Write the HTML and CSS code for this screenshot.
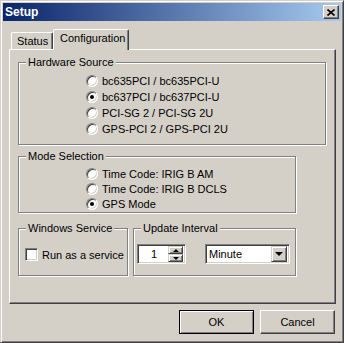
FILE: index.html
```html
<!DOCTYPE html>
<html lang="en">
<head>
<meta charset="UTF-8">
<title>Setup</title>
<link rel="stylesheet" href="styles.css">
</head>
<body>
<div class="window">
  <div class="titlebar">
    <span class="title">Setup</span>
    <span class="close">
      <svg width="8" height="7" viewBox="0 0 8 7"><path d="M0.5 0.5 L7.5 6.5 M7.5 0.5 L0.5 6.5" stroke="#000" stroke-width="1.6" fill="none"/></svg>
    </span>
  </div>

  <div class="tabs">
    <div class="tab">Status</div>
    <div class="tab active">Configuration</div>
  </div>

  <div class="panel">
    <div class="group hw">
      <span class="legend">Hardware Source</span>
      <div class="options">
        <div class="radio"><span class="circle"></span>bc635PCI / bc635PCI-U</div>
        <div class="radio"><span class="circle checked"></span>bc637PCI / bc637PCI-U</div>
        <div class="radio"><span class="circle"></span>PCI-SG 2 / PCI-SG 2U</div>
        <div class="radio"><span class="circle"></span>GPS-PCI 2 / GPS-PCI 2U</div>
      </div>
    </div>

    <div class="group mode">
      <span class="legend">Mode Selection</span>
      <div class="options">
        <div class="radio"><span class="circle"></span>Time Code: IRIG B AM</div>
        <div class="radio"><span class="circle"></span>Time Code: IRIG B DCLS</div>
        <div class="radio"><span class="circle checked"></span>GPS Mode</div>
      </div>
    </div>

    <div class="row">
      <div class="group service">
        <span class="legend">Windows Service</span>
        <div class="check"><span class="box"></span>Run as a service</div>
      </div>
      <div class="group interval">
        <span class="legend">Update Interval</span>
        <div class="controls">
          <div class="spin">
            <span class="value">1</span>
            <span class="arrows">
              <span class="arrow up"></span>
              <span class="arrow down"></span>
            </span>
          </div>
          <div class="combo">
            <span class="value">Minute</span>
            <span class="drop"></span>
          </div>
        </div>
      </div>
    </div>
  </div>

  <div class="buttons">
    <button class="btn default">OK</button>
    <button class="btn">Cancel</button>
  </div>
</div>
</body>
</html>
```

FILE: styles.css
```css
* { box-sizing: border-box; }
body { margin: 0; background: #d4d0c8; font-family: "Liberation Sans", Arial, sans-serif; font-size: 11px; color: #000; }

.window { width: 344px; height: 343px; padding: 2px; background: #d4d0c8; border: 1px solid; border-color: #d4d0c8 #404040 #404040 #d4d0c8; box-shadow: inset 1px 1px 0 #fff, inset -1px -1px 0 #808080; }

.titlebar { height: 18px; display: flex; align-items: center; justify-content: space-between; padding: 0 2px; background: linear-gradient(to right, #0a246a, #a6caf0); }
.title { color: #fff; font-weight: bold; font-size: 12px; }
.close { width: 16px; height: 14px; display: flex; align-items: center; justify-content: center; background: #d4d0c8; border: 1px solid; border-color: #fff #404040 #404040 #fff; box-shadow: inset -1px -1px 0 #808080; }

.tabs { display: flex; align-items: flex-end; height: 20px; margin: 8px 0 0 8px; position: relative; z-index: 1; }
.tab { height: 17px; padding: 2px 0 0 5px; width: 42px; background: #d4d0c8; border: 1px solid; border-bottom: none; border-color: #fff #404040 #404040 #fff; border-radius: 2px 2px 0 0; box-shadow: inset -1px 0 0 #808080; }
.tab.active { width: 76px; height: 21px; margin-bottom: -1px; padding: 2px 0 0 6px; }

.panel { width: 327px; height: 255px; margin-left: 6px; padding: 12px 8px 0; border: 1px solid; border-color: #fff #404040 #404040 #fff; box-shadow: inset -1px -1px 0 #808080; }

.group { border: 1px solid #808080; box-shadow: inset 1px 1px 0 #fff, 1px 1px 0 #fff; }
.legend { display: block; width: fit-content; height: 13px; line-height: 13px; margin: -7px 0 0 7px; padding: 0 2px; background: #d4d0c8; }

.hw { width: 308px; height: 83px; }
.hw .options { margin-top: 4px; padding-left: 67px; }
.hw .radio { height: 16px; }
.mode { width: 278px; height: 57px; margin-top: 11px; }
.mode .options { margin-top: 3px; padding-left: 67px; }
.mode .radio { height: 15px; }

.radio { display: flex; align-items: center; gap: 4px; }
.circle { width: 12px; height: 12px; border-radius: 50%; background: #fff; border: 1px solid; border-color: #808080 #fff #fff #808080; box-shadow: inset 1px 1px 0 #404040, inset -1px -1px 0 #d4d0c8; display: flex; align-items: center; justify-content: center; }
.circle.checked::after { content: ""; width: 4px; height: 4px; border-radius: 50%; background: #000; }

.row { display: flex; gap: 5px; margin-top: 15px; }
.service { width: 110px; height: 48px; }
.interval { width: 163px; height: 48px; }

.check { display: flex; align-items: center; gap: 4px; margin-top: 13px; padding-left: 6px; height: 13px; }
.box { width: 13px; height: 13px; background: #fff; border: 1px solid; border-color: #808080 #fff #fff #808080; box-shadow: inset 1px 1px 0 #404040, inset -1px -1px 0 #d4d0c8; }

.controls { display: flex; gap: 19px; margin-top: 9px; padding-left: 3px; }
.spin, .combo { height: 20px; display: flex; align-items: center; background: #fff; padding: 2px; border: 1px solid; border-color: #808080 #fff #fff #808080; box-shadow: inset 1px 1px 0 #404040, inset -1px -1px 0 #d4d0c8; }
.spin { width: 49px; }
.spin .value { flex: 1; text-align: center; }
.arrows { display: flex; flex-direction: column; width: 15px; height: 16px; }
.arrow { flex: 1; display: flex; align-items: center; justify-content: center; background: #d4d0c8; border: 1px solid; border-color: #d4d0c8 #404040 #404040 #d4d0c8; box-shadow: inset 1px 1px 0 #fff, inset -1px -1px 0 #808080; }
.arrow::after { content: ""; border-left: 3px solid transparent; border-right: 3px solid transparent; }
.arrow.up::after { border-bottom: 3px solid #000; }
.arrow.down::after { border-top: 3px solid #000; }

.combo { width: 85px; }
.combo .value { flex: 1; padding-left: 1px; }
.drop { width: 16px; height: 16px; display: flex; align-items: center; justify-content: center; background: #d4d0c8; border: 1px solid; border-color: #d4d0c8 #404040 #404040 #d4d0c8; box-shadow: inset 1px 1px 0 #fff, inset -1px -1px 0 #808080; }
.drop::after { content: ""; border-left: 4px solid transparent; border-right: 4px solid transparent; border-top: 4px solid #000; }

.buttons { display: flex; justify-content: flex-end; gap: 6px; margin-top: 6px; padding-right: 6px; }
.btn { width: 75px; height: 24px; font-family: inherit; font-size: 11px; color: #000; background: #d4d0c8; border: 1px solid; border-color: #fff #404040 #404040 #fff; box-shadow: inset -1px -1px 0 #808080; padding: 0; }
.btn.default { border-color: #000; box-shadow: inset 1px 1px 0 #fff, inset -1px -1px 0 #808080; }
```
